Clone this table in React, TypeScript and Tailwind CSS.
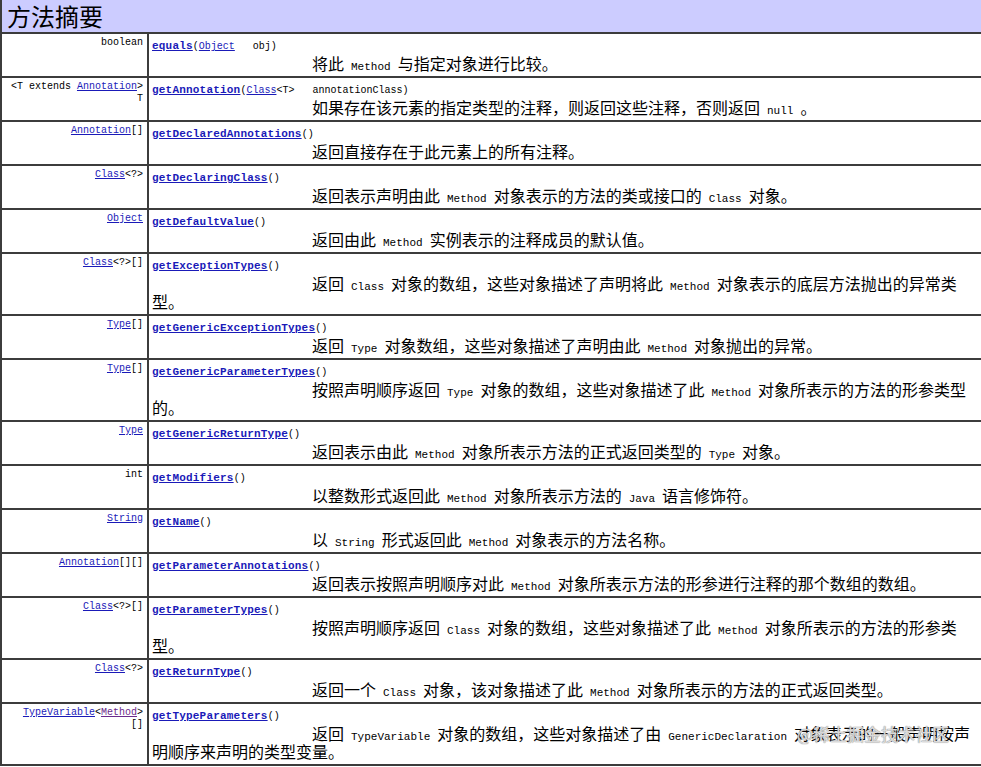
import React from 'react';

type Part = string | { code: string };

type Row = {
  type: React.ReactNode;
  name: string;
  params?: React.ReactNode;
  lines: Part[][];
};

const mono = 'font-["Liberation_Mono","DejaVu_Sans_Mono",monospace]';
const cjk = 'font-["Noto_Sans_CJK_SC","Noto_Sans",sans-serif]';

const TypeLink: React.FC<{ children: React.ReactNode; visited?: boolean }> = ({ children, visited }) => (
  <a href="#" className={`underline ${visited ? 'text-[#6b2a8c]' : 'text-[#1a1ab8]'}`}>
    {children}
  </a>
);

const c = (code: string) => ({ code });

const rows: Row[] = [
  {
    type: 'boolean',
    name: 'equals',
    params: (
      <>
        (<TypeLink>Object</TypeLink>&nbsp;&nbsp;&nbsp;obj)
      </>
    ),
    lines: [['将此', c('Method'), '与指定对象进行比较。']]
  },
  {
    type: (
      <>
        &lt;T extends <TypeLink>Annotation</TypeLink>&gt;
        <br />T
      </>
    ),
    name: 'getAnnotation',
    params: (
      <>
        (<TypeLink>Class</TypeLink>&lt;T&gt;&nbsp;&nbsp;&nbsp;annotationClass)
      </>
    ),
    lines: [['如果存在该元素的指定类型的注释，则返回这些注释，否则返回', c('null'), '。']]
  },
  {
    type: <><TypeLink>Annotation</TypeLink>[]</>,
    name: 'getDeclaredAnnotations',
    lines: [['返回直接存在于此元素上的所有注释。']]
  },
  {
    type: <><TypeLink>Class</TypeLink>&lt;?&gt;</>,
    name: 'getDeclaringClass',
    lines: [['返回表示声明由此', c('Method'), '对象表示的方法的类或接口的', c('Class'), '对象。']]
  },
  {
    type: <TypeLink>Object</TypeLink>,
    name: 'getDefaultValue',
    lines: [['返回由此', c('Method'), '实例表示的注释成员的默认值。']]
  },
  {
    type: <><TypeLink>Class</TypeLink>&lt;?&gt;[]</>,
    name: 'getExceptionTypes',
    lines: [
      ['返回', c('Class'), '对象的数组，这些对象描述了声明将此', c('Method'), '对象表示的底层方法抛出的异常类'],
      ['型。']
    ]
  },
  {
    type: <><TypeLink>Type</TypeLink>[]</>,
    name: 'getGenericExceptionTypes',
    lines: [['返回', c('Type'), '对象数组，这些对象描述了声明由此', c('Method'), '对象抛出的异常。']]
  },
  {
    type: <><TypeLink>Type</TypeLink>[]</>,
    name: 'getGenericParameterTypes',
    lines: [
      ['按照声明顺序返回', c('Type'), '对象的数组，这些对象描述了此', c('Method'), '对象所表示的方法的形参类型'],
      ['的。']
    ]
  },
  {
    type: <TypeLink>Type</TypeLink>,
    name: 'getGenericReturnType',
    lines: [['返回表示由此', c('Method'), '对象所表示方法的正式返回类型的', c('Type'), '对象。']]
  },
  {
    type: 'int',
    name: 'getModifiers',
    lines: [['以整数形式返回此', c('Method'), '对象所表示方法的', c('Java'), '语言修饰符。']]
  },
  {
    type: <TypeLink>String</TypeLink>,
    name: 'getName',
    lines: [['以', c('String'), '形式返回此', c('Method'), '对象表示的方法名称。']]
  },
  {
    type: <><TypeLink>Annotation</TypeLink>[][]</>,
    name: 'getParameterAnnotations',
    lines: [['返回表示按照声明顺序对此', c('Method'), '对象所表示方法的形参进行注释的那个数组的数组。']]
  },
  {
    type: <><TypeLink>Class</TypeLink>&lt;?&gt;[]</>,
    name: 'getParameterTypes',
    lines: [
      ['按照声明顺序返回', c('Class'), '对象的数组，这些对象描述了此', c('Method'), '对象所表示的方法的形参类'],
      ['型。']
    ]
  },
  {
    type: <><TypeLink>Class</TypeLink>&lt;?&gt;</>,
    name: 'getReturnType',
    lines: [['返回一个', c('Class'), '对象，该对象描述了此', c('Method'), '对象所表示的方法的正式返回类型。']]
  },
  {
    type: (
      <>
        <TypeLink>TypeVariable</TypeLink>&lt;<TypeLink visited>Method</TypeLink>&gt;
        <br />[]
      </>
    ),
    name: 'getTypeParameters',
    lines: [
      ['返回', c('TypeVariable'), '对象的数组，这些对象描述了由', c('GenericDeclaration'), '对象表示的一般声明按声'],
      ['明顺序来声明的类型变量。']
    ]
  }
];

const DescLine: React.FC<{ parts: Part[]; first: boolean }> = ({ parts, first }) => (
  <div className={`h-[18px] whitespace-nowrap leading-[18px] text-[16px] text-black ${cjk} ${first ? 'pl-[160px]' : ''}`}>
    {parts.map((p, i) =>
      typeof p === 'string' ? (
        <span key={i}>{p}</span>
      ) : (
        <span key={i} className={`${mono} text-[11px] leading-none px-[7px]`}>{p.code}</span>
      )
    )}
  </div>
);

export default function App() {
  return (
    <div className="w-[981px] h-[767px] overflow-hidden bg-white relative">
      <div className="border-l-2 border-[#3c3c3c]">
        <div className={`h-[34px] bg-[#ccccff] border-b-2 border-[#3c3c3c] pl-[5px] text-[24px] leading-[32px] text-black ${cjk}`}>
          方法摘要
        </div>
        {rows.map((r, i) => (
          <div key={i} className="grid grid-cols-[147px_1fr] border-b-2 border-[#3c3c3c]">
            <div className={`border-r-2 border-[#3c3c3c] text-right pr-[4px] pt-[3px] text-[10px] leading-[12px] text-black ${mono}`}>
              {r.type}
            </div>
            <div className="pl-[3px] pt-[5px] pb-[4px]">
              <div className={`h-[15px] leading-[15px] text-[11px] text-black whitespace-nowrap ${mono}`}>
                <a href="#" className="font-bold underline text-[#1a1ab8] tracking-[0.2px]">{r.name}</a>
                <span className="text-[10px]">{r.params ?? '()'}</span>
              </div>
              {r.lines.map((l, j) => (
                <DescLine key={j} parts={l} first={j === 0} />
              ))}
            </div>
          </div>
        ))}
      </div>
      <div className={`absolute left-[797px] top-[724px] text-[17px] leading-[20px] text-white/70 [text-shadow:0_0_1px_#888,0_0_1px_#888] ${cjk}`}>
        @稀土掘金技术社区
      </div>
    </div>
  );
}
